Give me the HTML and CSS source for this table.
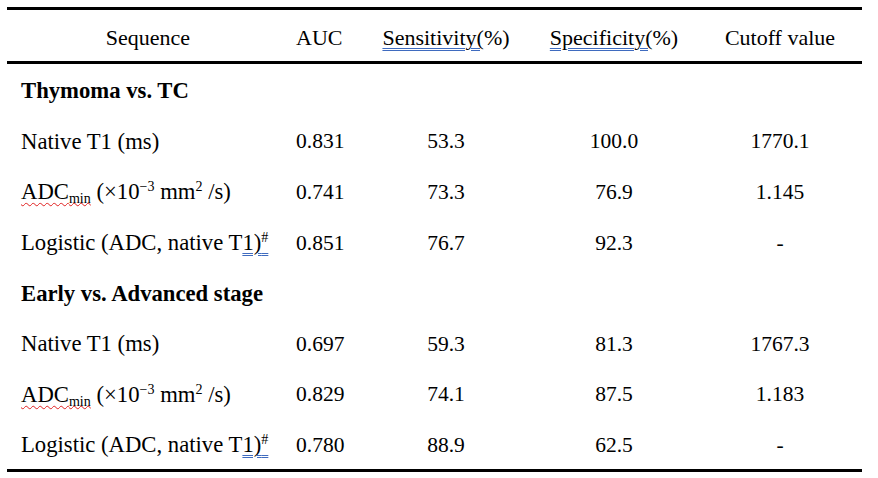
FILE: index.html
```html
<!DOCTYPE html>
<html>
<head>
<meta charset="utf-8">
<link rel="stylesheet" href="styles.css">
</head>
<body>
<div class="table">
  <div class="row head">
    <div class="c1 center">Sequence</div>
    <div class="c2">AUC</div>
    <div class="c3"><span class="blue">Sensitivity(</span>%)</div>
    <div class="c4"><span class="blue">Specificity(</span>%)</div>
    <div class="c5">Cutoff value</div>
  </div>
  <div class="body">
    <div class="row"><div class="c1 bold">Thymoma vs. TC</div></div>
    <div class="row">
      <div class="c1">Native T1 (ms)</div>
      <div class="c2">0.831</div><div class="c3">53.3</div><div class="c4">100.0</div><div class="c5">1770.1</div>
    </div>
    <div class="row">
      <div class="c1"><span class="red">ADC<sub>min</sub></span> (×10<sup>−3</sup> mm<sup>2</sup> /s)</div>
      <div class="c2">0.741</div><div class="c3">73.3</div><div class="c4">76.9</div><div class="c5">1.145</div>
    </div>
    <div class="row">
      <div class="c1">Logistic (ADC, native T<span class="blue">1)<sup>#</sup></span></div>
      <div class="c2">0.851</div><div class="c3">76.7</div><div class="c4">92.3</div><div class="c5">-</div>
    </div>
    <div class="row"><div class="c1 bold">Early vs. Advanced stage</div></div>
    <div class="row">
      <div class="c1">Native T1 (ms)</div>
      <div class="c2">0.697</div><div class="c3">59.3</div><div class="c4">81.3</div><div class="c5">1767.3</div>
    </div>
    <div class="row">
      <div class="c1"><span class="red">ADC<sub>min</sub></span> (×10<sup>−3</sup> mm<sup>2</sup> /s)</div>
      <div class="c2">0.829</div><div class="c3">74.1</div><div class="c4">87.5</div><div class="c5">1.183</div>
    </div>
    <div class="row">
      <div class="c1">Logistic (ADC, native T<span class="blue">1)<sup>#</sup></span></div>
      <div class="c2">0.780</div><div class="c3">88.9</div><div class="c4">62.5</div><div class="c5">-</div>
    </div>
  </div>
</div>
</body>
</html>
```
FILE: styles.css
```css
html, body {
  margin: 0;
  padding: 0;
  background: #ffffff;
}
body {
  font-family: "Liberation Serif", "Times New Roman", "DejaVu Serif", serif;
  font-size: 21.5px;
  color: #000000;
  padding: 7px 0 0 7px;
}
.table {
  width: 855px;
  border-top: 3px solid #000;
  border-bottom: 3px solid #000;
}
.row {
  display: grid;
  grid-template-columns: 282px 73px 168px 168px 164px;
  align-items: center;
  height: 50.6px;
  box-sizing: border-box;
  padding-top: 4px;
}
.row.head {
  height: 54px;
  padding-top: 4px;
  font-size: 22px;
  border-bottom: 3px solid #000;
}
.c1 {
  padding-left: 14px;
  white-space: nowrap;
  font-size: 22.7px;
}
.c1.center {
  padding-left: 0;
  text-align: center;
  font-size: 22px;
}
.c2 {
  padding-left: 7px;
}
.c3, .c4, .c5 {
  text-align: center;
}
.bold {
  font-weight: bold;
}
sub, sup {
  font-size: 0.62em;
  line-height: 0;
}
sub {
  vertical-align: -0.25em;
}
sup {
  vertical-align: 0.55em;
}
.blue {
  text-decoration: underline double #3f6bbf;
  text-decoration-thickness: 1px;
  text-underline-offset: 3px;
}
.red {
  text-decoration: underline wavy #e02020;
  text-decoration-thickness: 1px;
  text-underline-offset: 3px;
  text-decoration-skip-ink: none;
}
```
